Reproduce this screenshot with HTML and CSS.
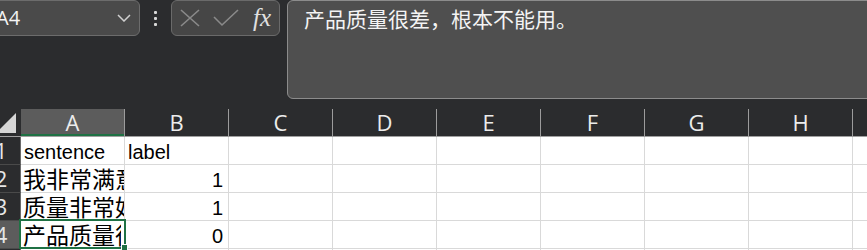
FILE: index.html
```html
<!DOCTYPE html>
<html lang="zh">
<head>
<meta charset="utf-8">
<title>Sheet</title>
<link rel="stylesheet" href="styles.css">
</head>
<body>
<div class="app">
  <div class="toolbar">
    <div class="namebox">
      <span class="ref">A4</span>
      <svg class="chev" width="14" height="8" viewBox="0 0 14 8"><path d="M1 1 L7 7 L13 1" fill="none" stroke="#d0d0d0" stroke-width="1.5"/></svg>
    </div>
    <div class="grip"><i></i><i></i><i></i></div>
    <div class="fxbox">
      <svg class="ico" width="20" height="18" viewBox="0 0 20 18"><path d="M1 1 L19 17 M19 1 L1 17" fill="none" stroke="#8a8a8a" stroke-width="1.6"/></svg>
      <svg class="ico" width="26" height="18" viewBox="0 0 26 18"><path d="M1 8 L9 16 L25 1" fill="none" stroke="#8a8a8a" stroke-width="1.6"/></svg>
      <span class="fx">fx</span>
    </div>
    <div class="formula">产品质量很差，根本不能用。</div>
  </div>

  <div class="sheet">
    <div class="corner"><svg width="20" height="20" viewBox="0 0 20 20"><path d="M20 0 L20 20 L0 20 Z" fill="#d6d6d6"/></svg></div>
    <div class="ch sel">A</div>
    <div class="ch">B</div>
    <div class="ch">C</div>
    <div class="ch">D</div>
    <div class="ch">E</div>
    <div class="ch">F</div>
    <div class="ch">G</div>
    <div class="ch">H</div>
    <div class="ch">I</div>

    <div class="rh">1</div>
    <div class="cell">sentence</div>
    <div class="cell">label</div>
    <div class="cell"></div><div class="cell"></div><div class="cell"></div><div class="cell"></div><div class="cell"></div><div class="cell"></div><div class="cell"></div>

    <div class="rh">2</div>
    <div class="cell cjk">我非常满意</div>
    <div class="cell num">1</div>
    <div class="cell"></div><div class="cell"></div><div class="cell"></div><div class="cell"></div><div class="cell"></div><div class="cell"></div><div class="cell"></div>

    <div class="rh">3</div>
    <div class="cell cjk">质量非常好</div>
    <div class="cell num">1</div>
    <div class="cell"></div><div class="cell"></div><div class="cell"></div><div class="cell"></div><div class="cell"></div><div class="cell"></div><div class="cell"></div>

    <div class="rh rsel">4</div>
    <div class="cell cjk active"><span class="clip">产品质量很差</span><span class="handle"></span></div>
    <div class="cell num">0</div>
    <div class="cell"></div><div class="cell"></div><div class="cell"></div><div class="cell"></div><div class="cell"></div><div class="cell"></div><div class="cell"></div>

    <div class="rh">5</div>
    <div class="cell"></div><div class="cell"></div><div class="cell"></div><div class="cell"></div><div class="cell"></div><div class="cell"></div><div class="cell"></div><div class="cell"></div><div class="cell"></div>
  </div>
</div>
</body>
</html>
```

FILE: styles.css
```css
html, body {
  margin: 0;
  padding: 0;
  background: #2b2c2e;
}
body {
  width: 867px;
  height: 250px;
  overflow: hidden;
}
.app {
  width: 867px;
  height: 250px;
  overflow: hidden;
}
.toolbar {
  display: flex;
  align-items: flex-start;
  height: 109px;
}
.namebox {
  box-sizing: border-box;
  flex: none;
  width: 170px;
  height: 36px;
  margin-left: -30px;
  padding-left: 25px;
  padding-right: 8px;
  background: #4a4a4a;
  border: 1px solid #6c6c6c;
  border-radius: 6px;
  display: flex;
  align-items: center;
  justify-content: space-between;
}
.ref {
  font-family: "Open Sans", sans-serif;
  font-size: 20px;
  color: #f4f4f4;
  line-height: 34px;
}
.chev { display: block; }
.grip {
  flex: none;
  width: 31px;
  height: 36px;
  display: flex;
  flex-direction: column;
  align-items: center;
  justify-content: center;
  gap: 3px;
}
.grip i {
  display: block;
  width: 3px;
  height: 3px;
  background: #d8d8d8;
  border-radius: 1px;
}
.fxbox {
  box-sizing: border-box;
  flex: none;
  width: 109px;
  height: 36px;
  background: #464646;
  border: 1px solid #6a6a6a;
  border-radius: 6px;
  display: flex;
  align-items: center;
  padding-left: 8px;
  gap: 13px;
}
.ico { display: block; }
.fx {
  font-family: "Liberation Serif", serif;
  font-style: italic;
  font-size: 25px;
  color: #e0e0e0;
  line-height: 30px;
  margin-left: 1px;
}
.formula {
  box-sizing: border-box;
  flex: none;
  width: 600px;
  height: 99px;
  margin-left: 7px;
  background: #4f4f4f;
  border: 1px solid #8c8c8c;
  border-radius: 6px;
  padding: 2px 0 0 16px;
  font-family: "Noto Sans CJK SC", sans-serif;
  font-size: 21px;
  line-height: 30px;
  color: #f4f4f4;
}
.sheet {
  display: grid;
  grid-template-columns: 39px repeat(9, 104px);
  grid-auto-rows: 28px;
  margin-left: -18px;
  width: 975px;
}
.corner {
  box-sizing: border-box;
  background: #2b2c2e;
  border-bottom: 1px solid #a0a0a0;
  display: flex;
  align-items: flex-end;
  justify-content: flex-end;
  padding: 0 5px 3px 0;
}
.corner svg { display: block; }
.ch {
  box-sizing: border-box;
  background: #2b2c2e;
  border-right: 1px solid #9c9c9c;
  border-bottom: 1px solid #a0a0a0;
  font-family: "Open Sans", sans-serif;
  font-size: 22px;
  line-height: 27px;
  color: #ececec;
  text-align: center;
  overflow: hidden;
}
.ch.sel {
  background: #5c5c5c;
  box-shadow: inset 0 -2px 0 #1f7144;
}
.rh {
  box-sizing: border-box;
  background: #2b2c2e;
  border-right: 1px solid #6a6a6a;
  border-bottom: 1px solid #4a4a4a;
  font-family: "Open Sans", sans-serif;
  font-size: 22px;
  line-height: 27px;
  color: #e6e6e6;
  text-align: center;
  overflow: hidden;
}
.rh.rsel {
  background: #5c5c5c;
}
.cell {
  box-sizing: border-box;
  background: #ffffff;
  border-right: 1px solid #d9d9d9;
  border-bottom: 1px solid #d9d9d9;
  padding: 0 3px;
  font-family: "Liberation Sans", sans-serif;
  font-size: 20px;
  line-height: 30px;
  color: #000;
  white-space: nowrap;
  overflow: hidden;
}
.cell.cjk {
  font-family: "Noto Sans CJK SC", sans-serif;
  font-size: 23px;
  line-height: 27px;
  padding-left: 2px;
}
.cell.num {
  text-align: right;
  padding-right: 5px;
}
.cell.active {
  position: relative;
  overflow: visible;
}
.clip {
  display: block;
  overflow: hidden;
  white-space: nowrap;
}
.cell.active::after {
  content: "";
  position: absolute;
  left: -2px;
  top: -2px;
  right: -2px;
  bottom: -1px;
  border: 2px solid #1f7144;
  pointer-events: none;
}
.handle {
  position: absolute;
  right: -4px;
  bottom: -3px;
  width: 5px;
  height: 5px;
  background: #1f7144;
  border: 1px solid #fff;
  z-index: 2;
}
```
